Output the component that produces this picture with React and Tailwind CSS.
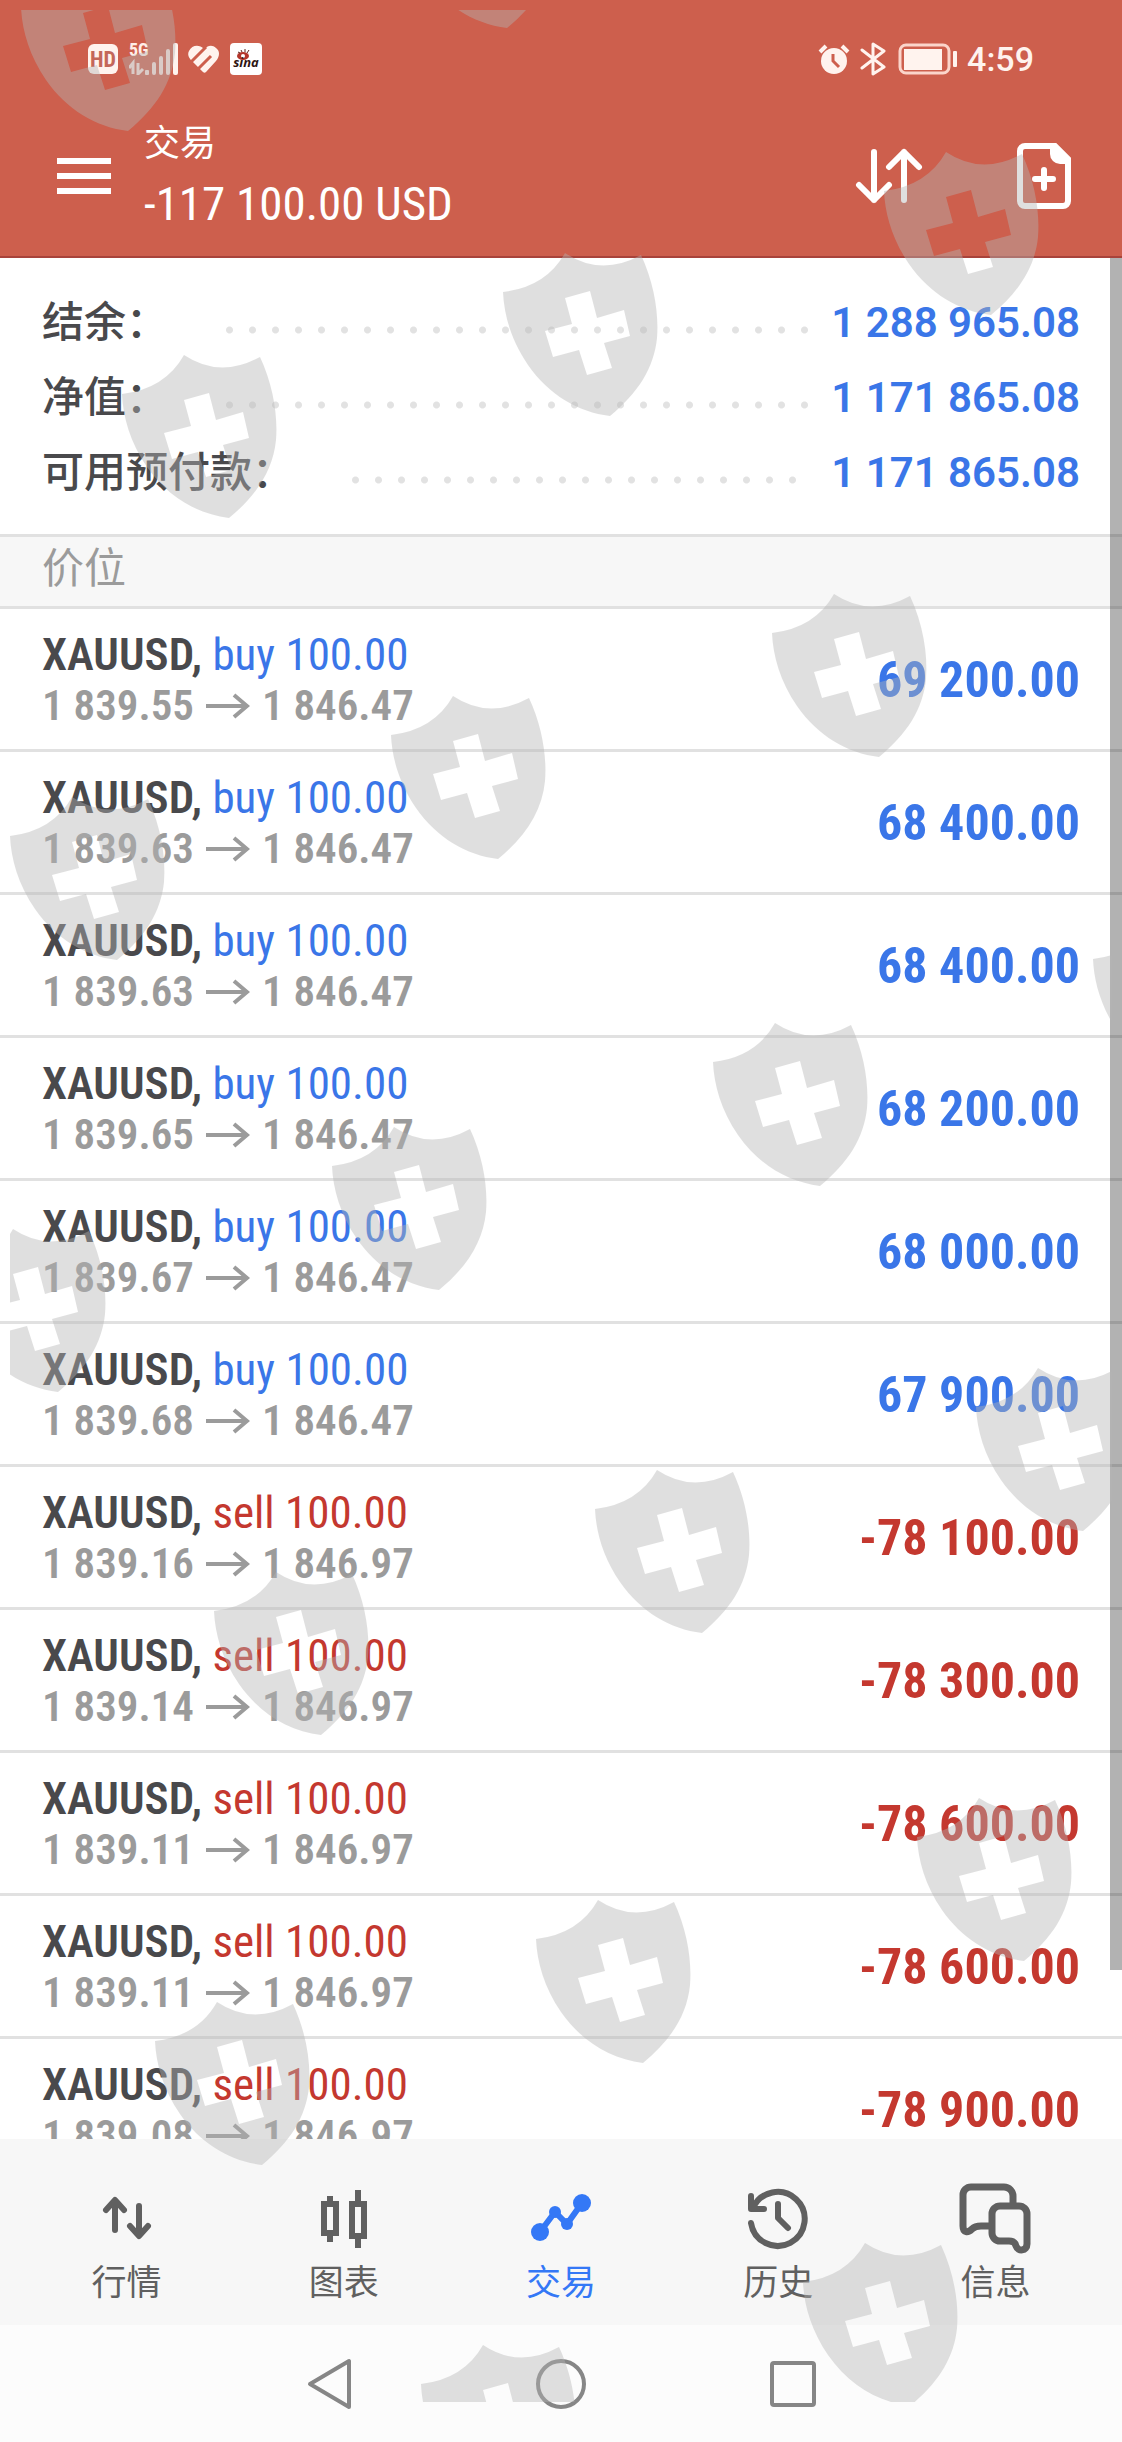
import React from "react";

const account = [
  { label: "结余：", value: "1 288 965.08" },
  { label: "净值：", value: "1 171 865.08" },
  { label: "可用预付款：", value: "1 171 865.08" },
];

const positions = [
  { side: "buy", open: "1 839.55", price: "1 846.47", profit: "69 200.00" },
  { side: "buy", open: "1 839.63", price: "1 846.47", profit: "68 400.00" },
  { side: "buy", open: "1 839.63", price: "1 846.47", profit: "68 400.00" },
  { side: "buy", open: "1 839.65", price: "1 846.47", profit: "68 200.00" },
  { side: "buy", open: "1 839.67", price: "1 846.47", profit: "68 000.00" },
  { side: "buy", open: "1 839.68", price: "1 846.47", profit: "67 900.00" },
  { side: "sell", open: "1 839.16", price: "1 846.97", profit: "-78 100.00" },
  { side: "sell", open: "1 839.14", price: "1 846.97", profit: "-78 300.00" },
  { side: "sell", open: "1 839.11", price: "1 846.97", profit: "-78 600.00" },
  { side: "sell", open: "1 839.11", price: "1 846.97", profit: "-78 600.00" },
  { side: "sell", open: "1 839.08", price: "1 846.97", profit: "-78 900.00" },
];

// Top-left corners of the shields inside the watermark layer
const shields = [
  [11, -42],
  [390, -145],
  [112, 345],
  [493, 243],
  [874, 142],
  [762, 584],
  [381, 686],
  [0, 787],
  [1083, 910],
  [703, 1013],
  [322, 1117],
  [-59, 1219],
  [966, 1358],
  [585, 1460],
  [204, 1562],
  [907, 1788],
  [526, 1890],
  [145, 1992],
  [793, 2233],
  [411, 2335],
];

const Shield = ({ left, top }) => (
  <svg
    className="absolute"
    style={{ left, top }}
    width="156"
    height="164"
    viewBox="0 0 156 164"
    fill="#b5b5b5"
  >
    <path
      fillRule="evenodd"
      d="M62 0Q98 24 138 2C151 30 156 60 154 85C151 115 135 140 107 163C75 159 46 142 25 112C8 87 1 62 0 39Q43 34 62 0ZM62 45L87 38L94 65L121 57L127 83L101 90L109 115L84 122L76 97L50 104L42 78L69 71Z"
    />
  </svg>
);

const Watermark = () => (
  <div
    className="pointer-events-none absolute inset-x-[10px] top-[10px] bottom-10 overflow-hidden opacity-42"
    aria-hidden="true"
  >
    {shields.map(([left, top]) => (
      <Shield key={`${left}-${top}`} left={left} top={top} />
    ))}
  </div>
);

const StatusBar = () => (
  <div className="flex h-[116px] items-start justify-between pt-[43px] pr-[88px] pl-[88px]">
    <div className="flex h-8 items-center">
      <span className="flex h-[30px] w-[30px] items-center justify-center rounded-md bg-[#fff3ee] text-[22px] font-bold text-[#c4675a]">
        HD
      </span>
      <div className="relative ml-[11px] h-8 w-[50px]">
        <span className="absolute -top-[2px] left-0 text-[18px] leading-[18px] font-bold text-[#ffeee8]">
          5G
        </span>
        <svg width="50" height="32" viewBox="0 0 50 32" fill="#f6dcd5">
          <rect x="16" y="27" width="4" height="5" rx="1" />
          <rect x="23" y="19" width="4" height="13" rx="2" />
          <rect x="30" y="13" width="4" height="19" rx="2" />
          <rect x="37" y="6" width="4" height="26" rx="2" />
          <rect x="44" y="0" width="5" height="32" rx="2" fill="#fff3ee" />
          <path d="M0 25L4 20V31M9 20V31L14 26" stroke="#f6dcd5" strokeWidth="3" fill="none" />
        </svg>
      </div>
      <svg className="ml-[9px]" width="32" height="28" viewBox="0 0 32 28" fill="none">
        <path
          d="M16 4C11 -1 4 0 1 6C-1 10 1 13 4 16L15 27C16 28 17 28 18 27L28 16C32 11 32 6 28 3C24 -1 19 1 16 4Z"
          fill="#fff3ee"
        />
        <path d="M3 17L18 2M10 24L23 11" stroke="#cd5f4d" strokeWidth="3" />
      </svg>
      <div className="relative ml-[10px] h-8 w-8 rounded-sm bg-white">
        <svg className="absolute top-[6px] left-[6px]" width="16" height="11" viewBox="0 0 16 11" fill="none">
          <ellipse cx="7" cy="7" rx="6" ry="4" fill="#b3352b" />
          <circle cx="7" cy="7" r="2" fill="#fff" />
          <path d="M2 3L4 4M5 1L6 3M9 0V3M13 1L11 4" stroke="#5c211b" strokeWidth="1" />
        </svg>
        <span className="absolute inset-x-0 top-[10px] text-center font-['Open_Sans',sans-serif] text-[13px] leading-[18px] font-bold text-[#2d1512] italic">
          sina
        </span>
      </div>
    </div>

    <div className="flex h-8 items-center text-[#fff3ee]">
      <svg width="32" height="32" viewBox="0 0 32 32" fill="none">
        <circle cx="16" cy="18" r="13" fill="currentColor" />
        <path d="M15 11V18L21 24" stroke="#cd5f4d" strokeWidth="3" />
        <path d="M2 9L8 3M24 3L30 9" stroke="currentColor" strokeWidth="4" />
      </svg>
      <svg className="ml-[10px]" width="26" height="34" viewBox="0 0 26 34" fill="none" stroke="currentColor" strokeWidth="3" strokeLinejoin="round" strokeLinecap="round">
        <path d="M2 8L24 25L13 32V2L24 9L2 26" />
      </svg>
      <svg className="ml-[12px]" width="60" height="32" viewBox="0 0 60 32" fill="none">
        <rect x="2" y="2" width="49" height="28" rx="6" stroke="#fbd5cb" strokeWidth="3" />
        <rect x="6" y="6" width="38" height="21" fill="currentColor" />
        <rect x="55" y="8" width="4" height="16" rx="1" fill="currentColor" />
      </svg>
      <span className="ml-[9px] font-['Roboto',sans-serif] text-[34px] leading-8 font-medium">
        4:59
      </span>
    </div>
  </div>
);

const Header = () => (
  <header className="border-b-2 border-[#a8433b] bg-[#cd5f4d] pb-5 text-white">
    <StatusBar />
    <div className="flex items-center pr-[51px] pl-[57px]">
      <button type="button" aria-label="Menu" className="flex w-[54px] flex-col gap-[9px]">
        <span className="h-[6px] bg-white" />
        <span className="h-[6px] bg-white" />
        <span className="h-[6px] bg-white" />
      </button>
      <div className="ml-[33px] flex-1">
        <p className="text-[36px] leading-[56px]">交易</p>
        <h1 className="text-[47px] leading-[64px] font-normal">-117 100.00 USD</h1>
      </div>
      <button type="button" aria-label="Sort">
        <svg width="68" height="56" viewBox="0 0 68 56" fill="none" stroke="currentColor" strokeWidth="6" strokeLinecap="round" strokeLinejoin="round">
          <path d="M19 4V52M4 37L19 52L34 37M49 52V4M34 19L49 4L64 19" />
        </svg>
      </button>
      <button type="button" aria-label="New order" className="ml-[94px]">
        <svg width="54" height="66" viewBox="0 0 54 66" fill="none">
          <path d="M8 3H38L51 16V58A5 5 0 0 1 46 63H8A5 5 0 0 1 3 58V8A5 5 0 0 1 8 3Z" stroke="currentColor" strokeWidth="6" />
          <path d="M33 3H39L52 16V21H43A10 10 0 0 1 33 11Z" fill="currentColor" />
          <path d="M27 27V45M18 36H36" stroke="currentColor" strokeWidth="6" strokeLinecap="round" />
        </svg>
      </button>
    </div>
  </header>
);

const AccountRow = ({ label, value }) => (
  <div className="flex h-[75px] items-center">
    <dt className="text-[42px] font-medium text-[#49494c]">{label}</dt>
    <div className="mt-[14px] ml-[50px] flex-1">
      <div className="h-2 w-[round(down,100%,23px)] bg-[radial-gradient(circle,#e2e2e2_3px,transparent_4px)] bg-[length:23px_8px]" />
    </div>
    <dd className="ml-3 font-['Roboto',sans-serif] text-[42px] font-semibold text-[#3a76e8]">
      {value}
    </dd>
  </div>
);

const Arrow = () => (
  <svg className="mx-3" width="44" height="26" viewBox="0 0 44 26" fill="none" stroke="currentColor" strokeWidth="4">
    <path d="M0 13H41M28 2L41 13L28 24" />
  </svg>
);

const PositionRow = ({ side, open, price, profit }) => {
  const color = side === "buy" ? "text-[#3a76e8]" : "text-[#c4382f]";

  return (
    <li className="flex shrink-0 items-center justify-between border-b-3 border-[#e1e1e1] px-[42px] pt-5 pb-[18px]">
      <div>
        <p className="text-[45px] leading-[51px]">
          <span className="font-semibold text-[#49494c]">XAUUSD,</span>{" "}
          <span className={color}>{side} 100.00</span>
        </p>
        <p className="flex items-center text-[43px] leading-[51px] font-semibold text-[#9b9b9b]">
          {open}
          <Arrow />
          {price}
        </p>
      </div>
      <p className={`text-[50px] font-bold ${color}`}>{profit}</p>
    </li>
  );
};

const QuotesIcon = () => (
  <path d="M24 48V19M15 28L24 18L33 28M48 24V53M39 44L48 54L57 44" strokeLinecap="round" strokeLinejoin="round" />
);

const ChartsIcon = () => (
  <path d="M16 22H28V51H16ZM22 14V20M22 52V60M44 22H56V54H44ZM50 8V20M50 56V66" />
);

const TradeIcon = () => (
  <>
    <path d="M15 50L30 30L42 42L57 21" />
    <g fill="currentColor" stroke="none">
      <circle cx="15" cy="50" r="9" />
      <circle cx="30" cy="30" r="6" />
      <circle cx="42" cy="42" r="6" />
      <circle cx="57" cy="21" r="9" />
    </g>
  </>
);

const HistoryIcon = () => (
  <path d="M9 41A27 27 0 1 0 11 26M9 14V27H22M36 22V36L46 46" strokeLinecap="round" strokeLinejoin="round" />
);

const MessagesIcon = () => (
  <g strokeWidth="7">
    <path d="M54 21V14A9 9 0 0 0 45 5H12A8 8 0 0 0 4 13V44C4 51 9 51 13 47C16 44 19 44 22 44H31" />
    <path d="M41 24H60A8 8 0 0 1 68 32V62C68 69 59 70 57 64C56 60 54 59 50 59H41A8 8 0 0 1 33 51V32A8 8 0 0 1 41 24Z" />
  </g>
);

const tabs = [
  { label: "行情", Icon: QuotesIcon },
  { label: "图表", Icon: ChartsIcon },
  { label: "交易", Icon: TradeIcon, active: true },
  { label: "历史", Icon: HistoryIcon },
  { label: "信息", Icon: MessagesIcon },
];

const TabBar = () => (
  <nav className="grid grid-cols-5 bg-[#f7f7f7] px-[18px] pt-[43px] pb-3">
    {tabs.map(({ label, Icon, active }) => (
      <button
        key={label}
        type="button"
        className={`flex flex-col items-center ${active ? "text-[#3478f6]" : "text-[#606060]"}`}
      >
        <svg width="72" height="72" viewBox="0 0 72 72" fill="none" stroke="currentColor" strokeWidth="6">
          <Icon />
        </svg>
        <span className="text-[35px] leading-[59px]">{label}</span>
      </button>
    ))}
  </nav>
);

const SystemNav = () => (
  <div className="flex h-[117px] items-center justify-center bg-[#fcfcfc] text-[#868686]">
    <button type="button" aria-label="Back" className="flex w-[232px] justify-center">
      <svg width="48" height="54" viewBox="0 0 48 54" fill="none" stroke="currentColor" strokeWidth="4" strokeLinejoin="round">
        <path d="M5 27L44 4V50Z" />
      </svg>
    </button>
    <button type="button" aria-label="Home" className="flex w-[232px] justify-center">
      <span className="h-[50px] w-[50px] rounded-full border-4 border-[#868686]" />
    </button>
    <button type="button" aria-label="Recent" className="flex w-[232px] justify-center">
      <span className="h-[46px] w-[46px] rounded-sm border-4 border-[#868686]" />
    </button>
  </div>
);

export default function App() {
  return (
    <div className="relative flex h-screen flex-col overflow-hidden bg-white font-['Roboto_Condensed','Noto_Sans_CJK_SC',sans-serif]">
      <Header />

      <main className="relative flex min-h-0 flex-1 flex-col overflow-hidden">
        <dl className="px-[42px] pt-[27px] pb-6">
          {account.map((row) => (
            <AccountRow key={row.label} {...row} />
          ))}
        </dl>
        <h2 className="border-y-3 border-[#e1e1e1] bg-[#f7f7f7] px-[42px] pt-[2px] pb-[7px] text-[42px] leading-[60px] font-normal text-[#9b9b9b]">
          价位
        </h2>
        <ul>
          {positions.map((p, i) => (
            <PositionRow key={i} {...p} />
          ))}
        </ul>
        {/* scroll indicator */}
        <div className="absolute top-0 right-0 h-[91%] w-3 bg-black/30" />
      </main>

      <TabBar />
      <SystemNav />
      <Watermark />
    </div>
  );
}
